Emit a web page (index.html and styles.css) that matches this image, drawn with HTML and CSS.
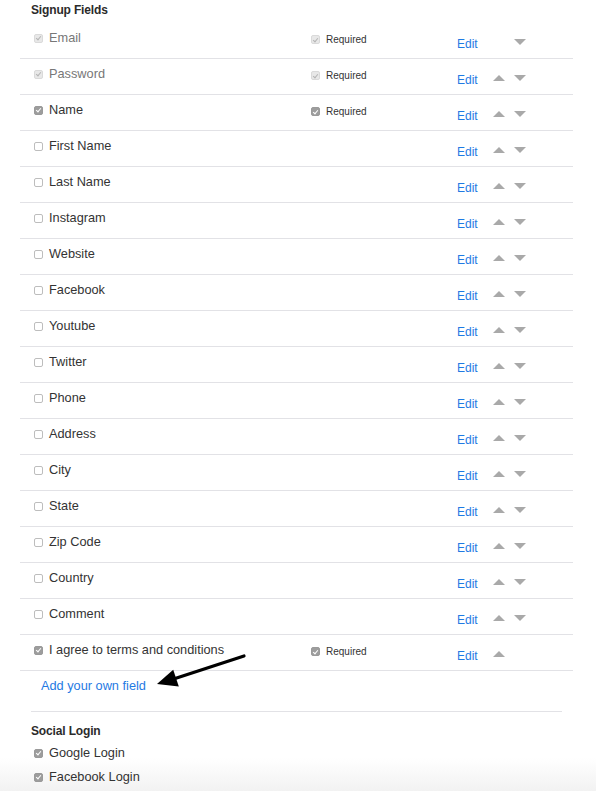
FILE: index.html
```html
<!DOCTYPE html>
<html lang="en">
<head>
<meta charset="utf-8">
<title>Signup Fields</title>
<link rel="stylesheet" href="styles.css">
</head>
<body>
<div class="page">
  <h2 class="heading">Signup Fields</h2>
  <div class="rows">
    <div class="row">
      <div class="c-label"><span class="cb on dis"></span><span class="lbl dis">Email</span></div>
      <div class="c-req"><span class="cb on dis"></span><span>Required</span></div>
      <div class="c-edit"><a class="edit">Edit</a></div>
      <div class="c-up"></div>
      <div class="c-down"><span class="tri down"></span></div>
    </div>
    <div class="row">
      <div class="c-label"><span class="cb on dis"></span><span class="lbl dis">Password</span></div>
      <div class="c-req"><span class="cb on dis"></span><span>Required</span></div>
      <div class="c-edit"><a class="edit">Edit</a></div>
      <div class="c-up"><span class="tri up"></span></div>
      <div class="c-down"><span class="tri down"></span></div>
    </div>
    <div class="row">
      <div class="c-label"><span class="cb on"></span><span class="lbl">Name</span></div>
      <div class="c-req"><span class="cb on"></span><span>Required</span></div>
      <div class="c-edit"><a class="edit">Edit</a></div>
      <div class="c-up"><span class="tri up"></span></div>
      <div class="c-down"><span class="tri down"></span></div>
    </div>
    <div class="row">
      <div class="c-label"><span class="cb"></span><span class="lbl">First Name</span></div>
      <div class="c-req"></div>
      <div class="c-edit"><a class="edit">Edit</a></div>
      <div class="c-up"><span class="tri up"></span></div>
      <div class="c-down"><span class="tri down"></span></div>
    </div>
    <div class="row">
      <div class="c-label"><span class="cb"></span><span class="lbl">Last Name</span></div>
      <div class="c-req"></div>
      <div class="c-edit"><a class="edit">Edit</a></div>
      <div class="c-up"><span class="tri up"></span></div>
      <div class="c-down"><span class="tri down"></span></div>
    </div>
    <div class="row">
      <div class="c-label"><span class="cb"></span><span class="lbl">Instagram</span></div>
      <div class="c-req"></div>
      <div class="c-edit"><a class="edit">Edit</a></div>
      <div class="c-up"><span class="tri up"></span></div>
      <div class="c-down"><span class="tri down"></span></div>
    </div>
    <div class="row">
      <div class="c-label"><span class="cb"></span><span class="lbl">Website</span></div>
      <div class="c-req"></div>
      <div class="c-edit"><a class="edit">Edit</a></div>
      <div class="c-up"><span class="tri up"></span></div>
      <div class="c-down"><span class="tri down"></span></div>
    </div>
    <div class="row">
      <div class="c-label"><span class="cb"></span><span class="lbl">Facebook</span></div>
      <div class="c-req"></div>
      <div class="c-edit"><a class="edit">Edit</a></div>
      <div class="c-up"><span class="tri up"></span></div>
      <div class="c-down"><span class="tri down"></span></div>
    </div>
    <div class="row">
      <div class="c-label"><span class="cb"></span><span class="lbl">Youtube</span></div>
      <div class="c-req"></div>
      <div class="c-edit"><a class="edit">Edit</a></div>
      <div class="c-up"><span class="tri up"></span></div>
      <div class="c-down"><span class="tri down"></span></div>
    </div>
    <div class="row">
      <div class="c-label"><span class="cb"></span><span class="lbl">Twitter</span></div>
      <div class="c-req"></div>
      <div class="c-edit"><a class="edit">Edit</a></div>
      <div class="c-up"><span class="tri up"></span></div>
      <div class="c-down"><span class="tri down"></span></div>
    </div>
    <div class="row">
      <div class="c-label"><span class="cb"></span><span class="lbl">Phone</span></div>
      <div class="c-req"></div>
      <div class="c-edit"><a class="edit">Edit</a></div>
      <div class="c-up"><span class="tri up"></span></div>
      <div class="c-down"><span class="tri down"></span></div>
    </div>
    <div class="row">
      <div class="c-label"><span class="cb"></span><span class="lbl">Address</span></div>
      <div class="c-req"></div>
      <div class="c-edit"><a class="edit">Edit</a></div>
      <div class="c-up"><span class="tri up"></span></div>
      <div class="c-down"><span class="tri down"></span></div>
    </div>
    <div class="row">
      <div class="c-label"><span class="cb"></span><span class="lbl">City</span></div>
      <div class="c-req"></div>
      <div class="c-edit"><a class="edit">Edit</a></div>
      <div class="c-up"><span class="tri up"></span></div>
      <div class="c-down"><span class="tri down"></span></div>
    </div>
    <div class="row">
      <div class="c-label"><span class="cb"></span><span class="lbl">State</span></div>
      <div class="c-req"></div>
      <div class="c-edit"><a class="edit">Edit</a></div>
      <div class="c-up"><span class="tri up"></span></div>
      <div class="c-down"><span class="tri down"></span></div>
    </div>
    <div class="row">
      <div class="c-label"><span class="cb"></span><span class="lbl">Zip Code</span></div>
      <div class="c-req"></div>
      <div class="c-edit"><a class="edit">Edit</a></div>
      <div class="c-up"><span class="tri up"></span></div>
      <div class="c-down"><span class="tri down"></span></div>
    </div>
    <div class="row">
      <div class="c-label"><span class="cb"></span><span class="lbl">Country</span></div>
      <div class="c-req"></div>
      <div class="c-edit"><a class="edit">Edit</a></div>
      <div class="c-up"><span class="tri up"></span></div>
      <div class="c-down"><span class="tri down"></span></div>
    </div>
    <div class="row">
      <div class="c-label"><span class="cb"></span><span class="lbl">Comment</span></div>
      <div class="c-req"></div>
      <div class="c-edit"><a class="edit">Edit</a></div>
      <div class="c-up"><span class="tri up"></span></div>
      <div class="c-down"><span class="tri down"></span></div>
    </div>
    <div class="row">
      <div class="c-label"><span class="cb on"></span><span class="lbl">I agree to terms and conditions</span></div>
      <div class="c-req"><span class="cb on"></span><span>Required</span></div>
      <div class="c-edit"><a class="edit">Edit</a></div>
      <div class="c-up"><span class="tri up"></span></div>
      <div class="c-down"></div>
    </div>
  </div>
  <div class="add"><a class="add-link">Add your own field</a></div>
  <div class="social">
    <h2 class="heading social-h">Social Login</h2>
    <div class="social-item"><span class="cb on"></span><span class="lbl">Google Login</span></div>
    <div class="social-item"><span class="cb on"></span><span class="lbl">Facebook Login</span></div>
  </div>
</div>
<svg class="arrow" width="100" height="45" viewBox="150 648 100 45" aria-hidden="true">
  <line x1="244" y1="656" x2="172" y2="679.5" stroke="#000" stroke-width="3.2" stroke-linecap="round"/>
  <polygon points="157,684 173.2,669.8 178.8,686.4" fill="#000"/>
</svg>
</body>
</html>
```

FILE: styles.css
```css
* { box-sizing: border-box; }

html, body {
  margin: 0;
  padding: 0;
}

body {
  position: relative;
  font-family: "Liberation Sans", Arial, Helvetica, sans-serif;
  color: #333;
  overflow: hidden;
  height: 791px;
  background: linear-gradient(to bottom, #fff 0, #fff 758px, #f2f2f2 791px);
}

.page {
  padding-left: 20px;
}

.heading {
  margin: 0;
  padding: 2px 0 0 11px;
  height: 23px;
  font-size: 12px;
  line-height: 16px;
  font-weight: bold;
  color: #2b2b2b;
  letter-spacing: -0.15px;
}

.rows {
  width: 553px;
}

.row {
  display: grid;
  grid-template-columns: 277px 146px 36px 21px 1fr;
  height: 36px;
  padding-left: 14px;
  border-bottom: 1px solid #e2e2e6;
}

.c-label {
  display: flex;
  align-items: center;
  height: 16px;
  margin-top: 7px;
}

.lbl {
  font-size: 12.75px;
  line-height: 16px;
  color: #333;
  white-space: nowrap;
}

.lbl.dis {
  color: #777;
}

.c-req {
  display: flex;
  align-items: center;
  height: 13px;
  margin-top: 10px;
  font-size: 10px;
  line-height: 13px;
  color: #333;
}

.c-edit {
  padding-top: 14px;
}

.edit, .add-link {
  color: #1f7ae3;
  text-decoration: none;
  cursor: pointer;
}

.edit {
  font-size: 12px;
  line-height: 14px;
  display: block;
}

.tri {
  display: block;
  width: 0;
  height: 0;
  margin-top: 16px;
  border-left: 6.5px solid transparent;
  border-right: 6.5px solid transparent;
}

.tri.up {
  border-bottom: 6px solid #a9a9a9;
}

.tri.down {
  border-top: 6px solid #a9a9a9;
}

/* checkboxes */
.cb {
  position: relative;
  flex: none;
  width: 9px;
  height: 9px;
  margin-right: 6px;
  border: 1px solid #bdbdbd;
  border-radius: 2px;
  background: #fff;
}

.cb.on {
  background: #9d9d9d;
  border-color: #9a9a9a;
}

.cb.on::after {
  content: "";
  position: absolute;
  left: 2.3px;
  top: 0.6px;
  width: 2px;
  height: 4px;
  border-right: 1.2px solid #fff;
  border-bottom: 1.2px solid #fff;
  transform: rotate(40deg);
}

.cb.on.dis {
  background: #e8e8e8;
  border-color: #dadada;
}

.cb.on.dis::after {
  border-color: #b5b5b5;
}

.add {
  padding: 7px 0 17px 21px;
  font-size: 12.75px;
  line-height: 16px;
}

.social {
  margin-left: 11px;
  width: 531px;
  border-top: 1px solid #e2e2e6;
  padding-top: 11px;
}

.social-h {
  padding: 0;
  height: 16px;
}

.social-item {
  display: flex;
  align-items: center;
  height: 24px;
  padding-left: 3px;
}

.social-h + .social-item {
  margin-top: 2px;
}

.arrow {
  position: absolute;
  left: 150px;
  top: 648px;
  pointer-events: none;
}
```
